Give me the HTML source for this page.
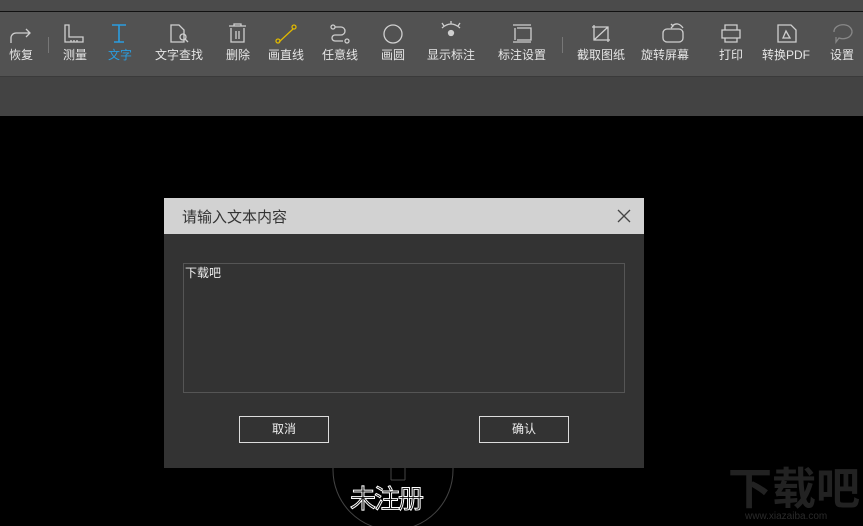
<!DOCTYPE html>
<html><head><meta charset="utf-8"><style>
body{margin:0;width:863px;height:526px;background:#000;position:relative;overflow:hidden;font-family:"Liberation Sans","Noto Sans CJK SC",sans-serif}
.a{position:absolute}
.lb{position:absolute;top:46px;font-size:12px;color:#e6e6e6;transform:translateX(-50%);white-space:nowrap}
svg.i{position:absolute;top:22px;overflow:visible}
</style></head><body>
<div class="a" style="left:0;top:0;width:863px;height:11px;background:#4b4b4b"></div>
<div class="a" style="left:0;top:11px;width:863px;height:1px;background:#111"></div>
<div class="a" style="left:0;top:12px;width:863px;height:64px;background:#525252"></div>
<div class="a" style="left:0;top:76px;width:863px;height:39px;background:#434343;border-top:1px solid #3a3a3a"></div>
<div class="a" style="left:48px;top:37px;width:1px;height:16px;background:#777"></div>
<div class="a" style="left:562px;top:37px;width:1px;height:16px;background:#777"></div>
<svg class="i" width="863" height="24" style="left:0" fill="none" stroke="#cfcfcf" stroke-width="1.3">
<path d="M11 43 v-5 a5 5 0 0 1 5-5 h14 M26 29 l4 4 -4 4" transform="translate(0,-22)"/>
<g transform="translate(0,-22)">
<path d="M65 25 v17 h18 v-5 h-14 v-12 z M71 42 v-2 M74 42 v-2 M77 42 v-2"/>
<path d="M112 25 h14 M119 25 v17 M114 42 h10" stroke="#2a9de0" stroke-width="1.6"/>
<path d="M171 25 h8 l5 5 v12 h-13 z"/><circle cx="183" cy="37" r="3"/><path d="M185 39 l3 3"/>
<path d="M229 26 h17 M234 26 v-2 h7 v2 M231 28 v14 h13 v-14 M236 31 v8 M239 31 v8"/>
<path d="M279 42 l14-13" stroke="#e0b800"/><circle cx="278" cy="41" r="2" stroke="#e0b800"/><circle cx="294" cy="27" r="2" stroke="#e0b800"/>
<circle cx="333" cy="27" r="2"/><path d="M335 27 h6 a4 4 0 0 1 0 8 h-6 a3 3 0 0 0 0 6 h8"/><circle cx="347" cy="41" r="2"/>
<circle cx="393" cy="34" r="9"/>
<path d="M442 28 q9 -8 18 0 M444 26 l-2-3 M451 24 v-3 M458 26 l2-3"/><circle cx="451" cy="33" r="2.5" fill="#cfcfcf"/>
<path d="M513 25 h18 M513 42 h18 M515 28 v12 M517 28 h14 v12 h-14"/>
<path d="M592 27 h16 v15 M594 25 v15 h16 M594 40 l14-13"/>
<path d="M663 33 a4 4 0 0 1 4-4 h12 a4 4 0 0 1 4 4 v5 a4 4 0 0 1-4 4 h-12 a4 4 0 0 1-4-4 z M672 26 q6-5 11 2 M671 24 l2 2 -2 2"/>
<path d="M725 30 v-5 h12 v5 M722 30 h18 v8 h-18 z M725 38 v4 h12 v-4"/>
<path d="M778 25 h13 l5 5 v12 h-18 z M786 31 l-3 7 h7 z"/>
<path d="M834 32 a9 7 0 1 1 5 6 l-3 4 v-5" stroke="#888"/>
</g>
</svg>
<div class="lb" style="left:21px">恢复</div>
<div class="lb" style="left:75px">测量</div>
<div class="lb" style="left:120px;color:#2a9de0">文字</div>
<div class="lb" style="left:179px">文字查找</div>
<div class="lb" style="left:238px">删除</div>
<div class="lb" style="left:286px">画直线</div>
<div class="lb" style="left:340px">任意线</div>
<div class="lb" style="left:393px">画圆</div>
<div class="lb" style="left:451px">显示标注</div>
<div class="lb" style="left:522px">标注设置</div>
<div class="lb" style="left:601px">截取图纸</div>
<div class="lb" style="left:665px">旋转屏幕</div>
<div class="lb" style="left:731px">打印</div>
<div class="lb" style="left:786px">转换PDF</div>
<div class="lb" style="left:842px">设置</div>

<svg class="a" style="left:330px;top:460px" width="130" height="66" fill="none" stroke="#444">
<path d="M3 0 v10 a60 60 0 0 0 120 0 v-10 M61 0 v20 M75 0 v20 M61 20 h14"/>
</svg>
<div class="a" style="left:350px;top:479px;font-size:26px;color:#000;-webkit-text-stroke:1px #fff;letter-spacing:-2px;white-space:nowrap">未注册</div>
<div class="a" style="left:728px;top:462px;font-size:44px;font-weight:bold;color:#222;line-height:56px;white-space:nowrap">下载吧</div>
<div class="a" style="left:745px;top:511px;font-size:10px;color:#2a2a2a;white-space:nowrap">www.xiazaiba.com</div>

<div class="a" style="left:164px;top:198px;width:480px;height:270px;background:#333">
<div class="a" style="left:0;top:0;width:480px;height:36px;background:#d2d2d2"></div>
<div class="a" style="left:18px;top:8px;font-size:15px;color:#333">请输入文本内容</div>
<svg class="a" style="left:453px;top:11px" width="14" height="14" stroke="#444" stroke-width="1.3"><path d="M1 1 L13 13 M13 1 L1 13"/></svg>
<div class="a" style="left:19px;top:65px;width:440px;height:128px;border:1px solid #555"></div>
<div class="a" style="left:21px;top:66px;font-size:12px;color:#eee">下载吧</div>
<div class="a" style="left:75px;top:218px;width:88px;height:25px;border:1px solid #ddd;color:#eee;font-size:12px;text-align:center;line-height:25px">取消</div>
<div class="a" style="left:315px;top:218px;width:88px;height:25px;border:1px solid #ddd;color:#eee;font-size:12px;text-align:center;line-height:25px">确认</div>
</div>
</body></html>
